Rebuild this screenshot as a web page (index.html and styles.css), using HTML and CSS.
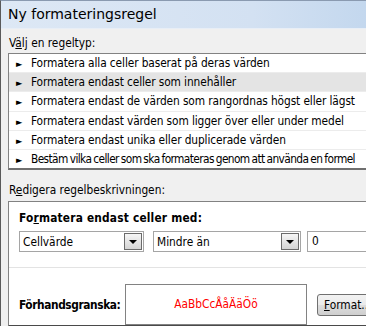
FILE: index.html
```html
<!DOCTYPE html>
<html lang="sv">
<head>
    <meta charset="UTF-8">
    <title>Ny formateringsregel</title>
    <link rel="stylesheet" href="styles.css">
</head>
<body>
    <div class="window">
        <div class="titlebar">Ny formateringsregel</div>

        <div class="content">
            <div class="label">V<u>ä</u>lj en regeltyp:</div>
            <ul class="rule-list">
                <li><span class="tri">&#9658;</span>Formatera alla celler baserat på deras värden</li>
                <li class="selected"><span class="tri">&#9658;</span>Formatera endast celler som innehåller</li>
                <li><span class="tri">&#9658;</span>Formatera endast de värden som rangordnas högst eller lägst</li>
                <li><span class="tri">&#9658;</span>Formatera endast värden som ligger över eller under medel</li>
                <li><span class="tri">&#9658;</span>Formatera endast unika eller duplicerade värden</li>
                <li class="tight"><span class="tri">&#9658;</span>Bestäm vilka celler som ska formateras genom att använda en formel</li>
            </ul>

            <div class="label label-edit">R<u>e</u>digera regelbeskrivningen:</div>
            <div class="panel">
                <div class="panel-title">Fo<u>r</u>matera endast celler med:</div>
                <div class="row">
                    <div class="combo combo-1"><span>Cellvärde</span><span class="drop"></span></div>
                    <div class="combo combo-2"><span>Mindre än</span><span class="drop"></span></div>
                    <div class="field">0</div>
                </div>
                <div class="sep"></div>
                <div class="preview-row">
                    <div class="preview-label">Förhandsgranska:</div>
                    <div class="preview">AaBbCcÅåÄäÖö</div>
                    <button class="btn"><u>F</u>ormat...</button>
                </div>
            </div>
        </div>
    </div>
</body>
</html>
```

FILE: styles.css
```css
body {
    margin: 0;
    width: 366px;
    height: 326px;
    overflow: hidden;
    font-family: Tahoma, "DejaVu Sans Condensed", "DejaVu Sans", sans-serif;
    font-size: 11.8px;
    color: #000;
    background: #f0f0f0;
}

.window {
    width: 420px;
    height: 326px;
    border-left: 1px solid #5a5a5a;
    border-top: 1px solid #8a9ab0;
    box-sizing: border-box;
    background: #f0f0f0;
}

.titlebar {
    height: 27px;
    line-height: 26px;
    padding-left: 7px;
    font-size: 14px;
    font-family: "DejaVu Sans", sans-serif;
    background: linear-gradient(to right, #dde8f5 0%, #d3e1f2 60%, #bcd3ec 100%);
    border-bottom: 1px solid #e8eef6;
}

.content {
    padding: 4px 0 0 7px;
}

.label {
    height: 20px;
    line-height: 20px;
    padding-left: 1px;
}

.rule-list {
    list-style: none;
    margin: 0;
    padding: 0;
    background: #fff;
    border: 1px solid #828282;
    border-right: none;
    border-bottom: 2px solid #6f6f6f;
}

.rule-list li {
    height: 18.2px;
    line-height: 18px;
    padding-left: 7px;
    border-bottom: 1px solid #ececec;
    white-space: nowrap;
    letter-spacing: -0.1px;
}

.rule-list li:last-child {
    border-bottom: none;
}

.rule-list .selected {
    background: #e4e4e4;
}

.rule-list .tight {
    letter-spacing: -0.6px;
    word-spacing: -0.8px;
}

.tri {
    display: inline-block;
    width: 15px;
    font-size: 9px;
    letter-spacing: 0;
}

.label-edit {
    margin-top: 10px;
    margin-bottom: 1px;
}

.panel {
    background: #fff;
    border: 1px solid #828282;
    border-right: none;
    border-bottom: 2px solid #4a4a4a;
    height: 116px;
    padding: 7px 0 0 10px;
}

.panel-title {
    font-weight: bold;
    height: 18px;
    line-height: 18px;
    letter-spacing: 0.2px;
}

.row {
    display: flex;
    margin-top: 4px;
}

.combo {
    height: 21px;
    border: 1px solid #a5a5a5;
    display: flex;
    justify-content: space-between;
    align-items: center;
    padding: 0 1px 0 3px;
    box-sizing: border-box;
}

.combo-1 {
    width: 125px;
    margin-right: 9px;
}

.combo-2 {
    width: 148px;
    margin-right: 6px;
}

.drop {
    width: 18px;
    height: 17px;
    box-sizing: border-box;
    border: 1px solid #6b6b6b;
    background: linear-gradient(#f6f6f6, #d4d4d4);
    position: relative;
}

.drop::after {
    content: '';
    position: absolute;
    left: 4px;
    top: 6px;
    border-left: 4px solid transparent;
    border-right: 4px solid transparent;
    border-top: 4px solid #000;
}

.field {
    width: 80px;
    height: 21px;
    line-height: 19px;
    border: 1px solid #a5a5a5;
    box-sizing: border-box;
    padding-left: 4px;
}

.sep {
    height: 1px;
    background: #e3e3e3;
    margin: 15px 0 0 -10px;
}

.preview-row {
    display: flex;
    align-items: center;
    margin-top: 16px;
}

.preview-label {
    font-weight: bold;
    width: 106px;
    letter-spacing: -0.4px;
}

.preview {
    width: 182px;
    height: 41px;
    border: 1px solid #828282;
    box-sizing: border-box;
    color: #ff0000;
    text-align: center;
    line-height: 39px;
}

.btn {
    margin-left: 10px;
    width: 70px;
    height: 22px;
    font: inherit;
    text-align: left;
    padding-left: 6px;
    border: 1px solid #707070;
    border-radius: 3px;
    background: linear-gradient(#f2f2f2 0%, #ebebeb 50%, #dddddd 51%, #cfcfcf 100%);
}
```
